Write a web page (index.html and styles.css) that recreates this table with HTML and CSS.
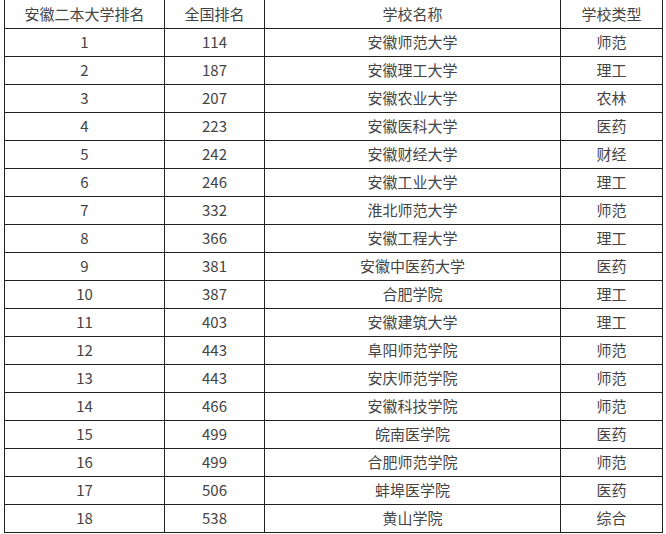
FILE: index.html
```html
<!DOCTYPE html>
<html lang="zh-CN">
<head>
<meta charset="utf-8">
<title>安徽二本大学排名</title>
<link rel="stylesheet" href="styles.css">
</head>
<body>
<table class="rank">
<colgroup>
<col class="c1"><col class="c2"><col class="c3"><col class="c4">
</colgroup>
<thead>
<tr><th>安徽二本大学排名</th><th>全国排名</th><th>学校名称</th><th>学校类型</th></tr>
</thead>
<tbody>
<tr><td>1</td><td>114</td><td>安徽师范大学</td><td>师范</td></tr>
<tr><td>2</td><td>187</td><td>安徽理工大学</td><td>理工</td></tr>
<tr><td>3</td><td>207</td><td>安徽农业大学</td><td>农林</td></tr>
<tr><td>4</td><td>223</td><td>安徽医科大学</td><td>医药</td></tr>
<tr><td>5</td><td>242</td><td>安徽财经大学</td><td>财经</td></tr>
<tr><td>6</td><td>246</td><td>安徽工业大学</td><td>理工</td></tr>
<tr><td>7</td><td>332</td><td>淮北师范大学</td><td>师范</td></tr>
<tr><td>8</td><td>366</td><td>安徽工程大学</td><td>理工</td></tr>
<tr><td>9</td><td>381</td><td>安徽中医药大学</td><td>医药</td></tr>
<tr><td>10</td><td>387</td><td>合肥学院</td><td>理工</td></tr>
<tr><td>11</td><td>403</td><td>安徽建筑大学</td><td>理工</td></tr>
<tr><td>12</td><td>443</td><td>阜阳师范学院</td><td>师范</td></tr>
<tr><td>13</td><td>443</td><td>安庆师范学院</td><td>师范</td></tr>
<tr><td>14</td><td>466</td><td>安徽科技学院</td><td>师范</td></tr>
<tr><td>15</td><td>499</td><td>皖南医学院</td><td>医药</td></tr>
<tr><td>16</td><td>499</td><td>合肥师范学院</td><td>师范</td></tr>
<tr><td>17</td><td>506</td><td>蚌埠医学院</td><td>医药</td></tr>
<tr><td>18</td><td>538</td><td>黄山学院</td><td>综合</td></tr>
</tbody>
</table>
</body>
</html>
```
FILE: styles.css
```css
html, body {
  margin: 0;
  padding: 0;
  background: #fff;
}
body {
  padding-left: 4px;
  font-family: "Noto Sans CJK SC", "Noto Sans", sans-serif;
  font-size: 15px;
  color: #444;
}
.rank {
  border-collapse: collapse;
  table-layout: fixed;
  width: 658px;
  margin-top: -1px;
}
.rank .c1 { width: 160px; }
.rank .c2 { width: 100px; }
.rank .c3 { width: 296px; }
.rank .c4 { width: 102px; }
.rank th,
.rank td {
  border: 1px solid #222;
  height: 27px;
  padding: 0 0 2px;
  text-align: center;
  vertical-align: middle;
  font-weight: normal;
  line-height: 25px;
  box-sizing: border-box;
}
.rank th {
  height: 28px;
  padding-top: 1px;
}
```
